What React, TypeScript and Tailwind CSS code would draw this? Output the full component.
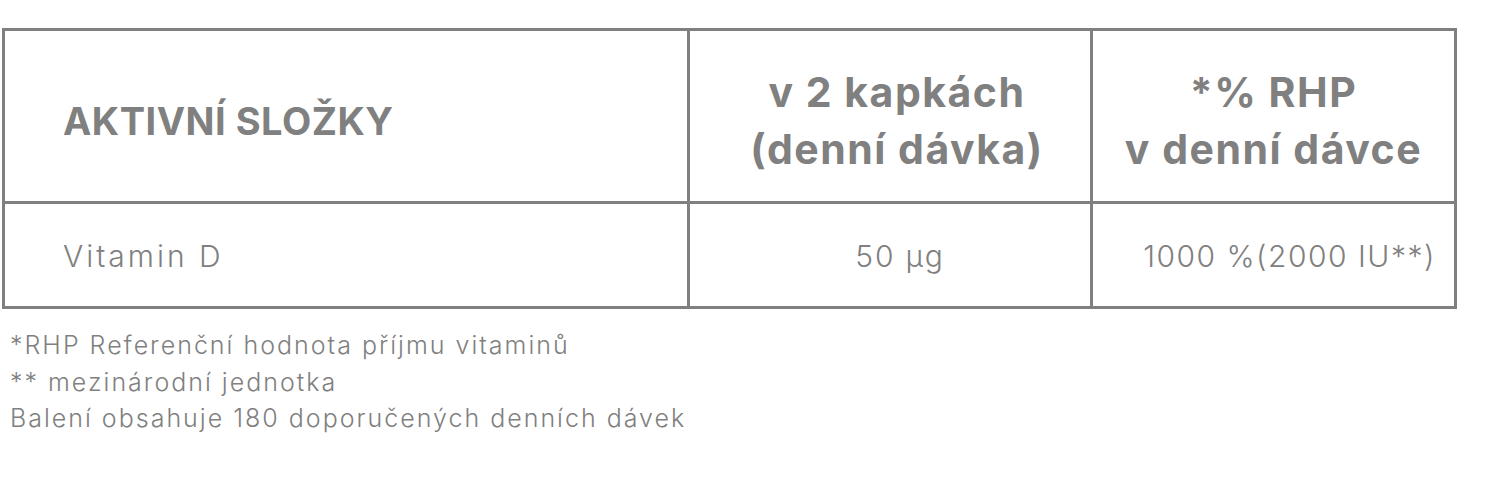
const font = { fontFamily: 'Inter, "Noto Sans", sans-serif' }

export default function App() {
  return (
    <div className="min-h-[500px] w-[1500px] bg-white text-[#808080]" style={font}>
      <div className="pl-[2px] pt-[28px]">
        <div className="grid w-[1455px] grid-cols-[685px_403px_1fr] border-[3px] border-[#808080]">
          {/* Header row */}
          <div className="flex h-[173px] items-center border-b-[3px] border-r-[3px] border-[#808080] pl-[58px] pt-[10px] text-[38px] font-bold tracking-[0.5px]">
            AKTIVNÍ SLOŽKY
          </div>
          <div className="flex h-[173px] flex-col items-center justify-center border-b-[3px] border-r-[3px] border-[#808080] pl-[14px] pt-[10px] text-center text-[41px] font-bold leading-[57px] tracking-[1.5px]">
            <span>v 2 kapkách</span>
            <span>(denní dávka)</span>
          </div>
          <div className="flex h-[173px] flex-col items-center justify-center border-b-[3px] border-[#808080] pt-[10px] text-center text-[41px] font-bold leading-[57px] tracking-[1.5px]">
            <span>*% RHP</span>
            <span>v denní dávce</span>
          </div>

          {/* Data row */}
          <div className="flex h-[102px] items-center border-r-[3px] border-[#808080] pl-[58px] pt-[2px] text-[30px] font-light tracking-[3px]">
            Vitamin D
          </div>
          <div className="flex h-[102px] items-center justify-center border-r-[3px] border-[#808080] pl-[20px] pt-[2px] text-[30px] font-light tracking-[1.8px]">
            50 µg
          </div>
          <div className="flex h-[102px] items-center justify-center pl-[32px] pt-[2px] text-[30px] font-light tracking-[1.5px]">
            1000 %(2000 IU**)
          </div>
        </div>
      </div>

      <div className="mt-[18px] pl-[10px] text-[25px] font-light leading-[36.5px] tracking-[2px]">
        <p>*RHP Referenční hodnota příjmu vitaminů</p>
        <p>** mezinárodní jednotka</p>
        <p>Balení obsahuje 180 doporučených denních dávek</p>
      </div>
    </div>
  )
}
